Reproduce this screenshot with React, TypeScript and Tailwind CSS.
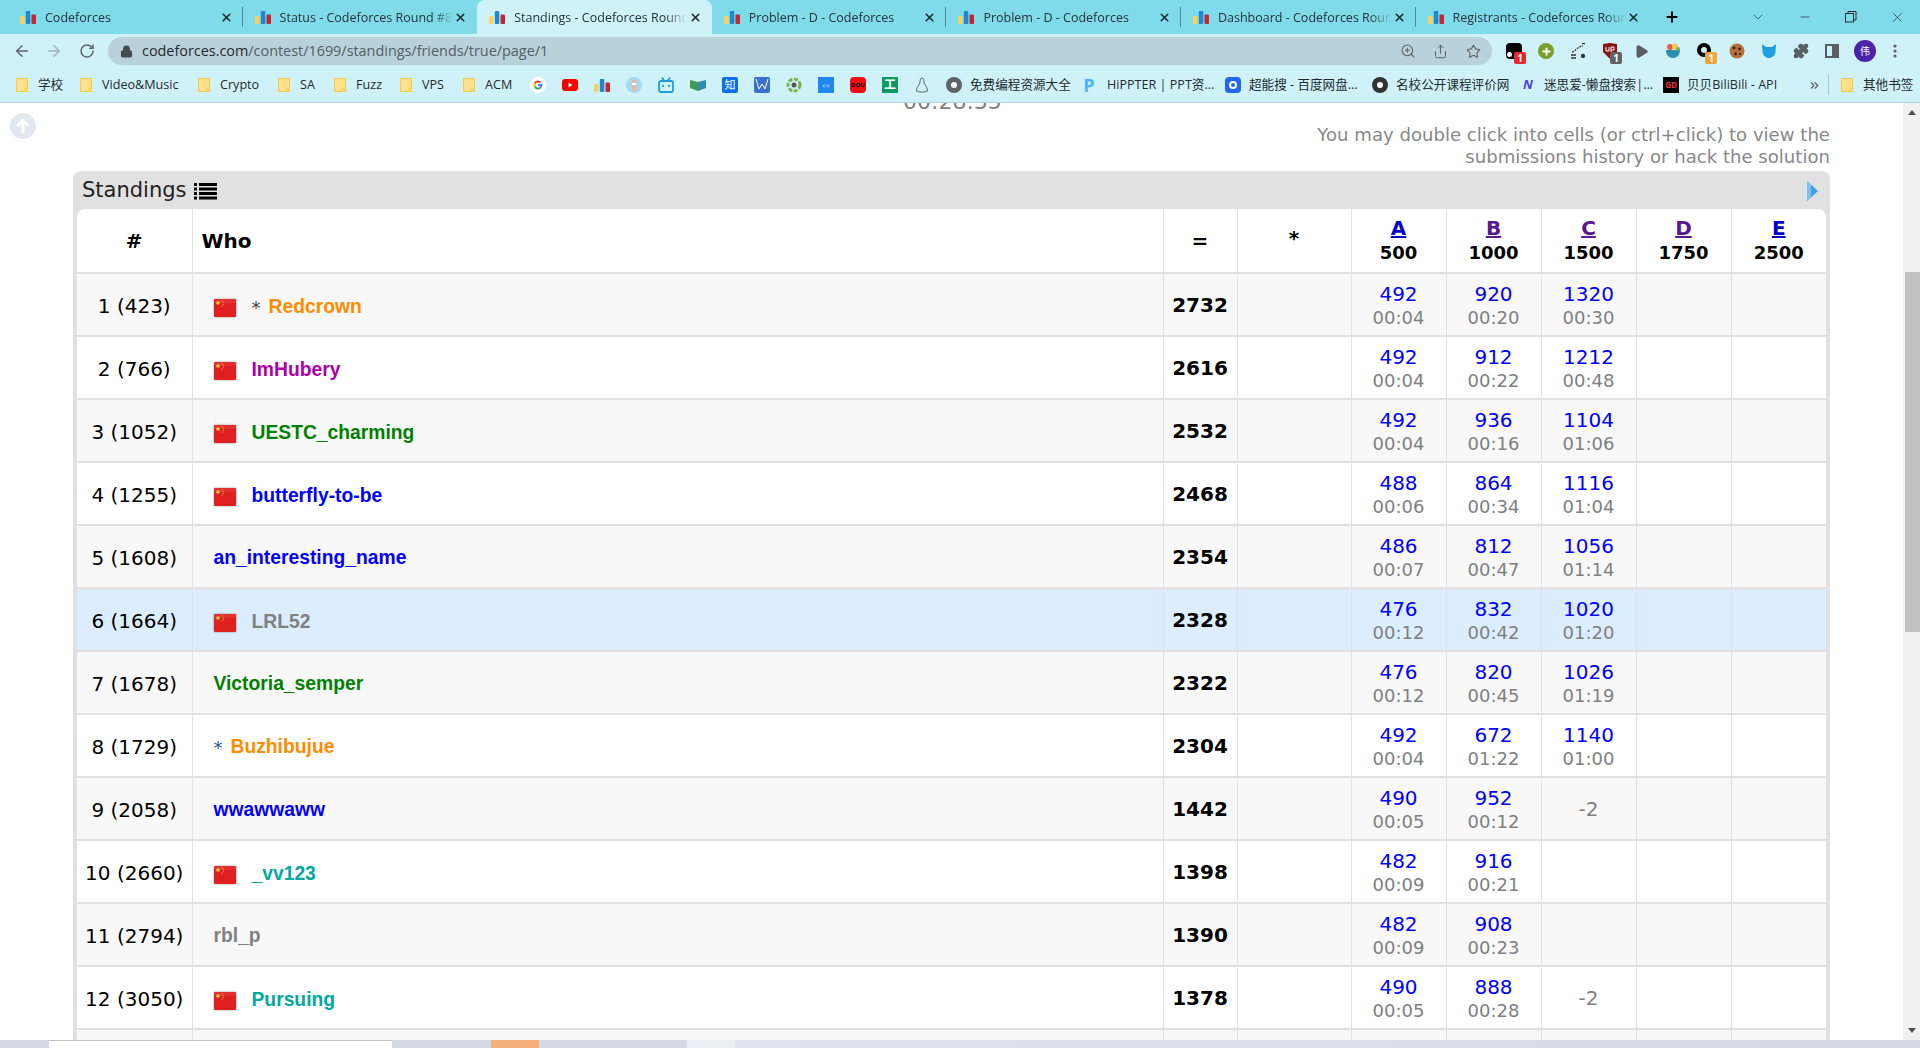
import { ArrowLeft, ArrowRight, RotateCw, Lock, ZoomIn, Share, Star, Puzzle, X, Plus, Minus, ChevronDown, ChevronsRight, Play, Plus as PlusIcon } from 'lucide-react';

const ui = "font-['Open_Sans','Noto_Sans_CJK_SC',sans-serif]";

const CfIcon = () => (
  <svg width="16" height="13" viewBox="0 0 16 13" className="shrink-0">
    <rect x="0" y="5" width="4.5" height="8" rx="1" fill="#fbd05b" />
    <rect x="5.8" y="0" width="4.5" height="13" rx="1" fill="#1e88d2" />
    <rect x="11.5" y="3.5" width="4.5" height="9.5" rx="1" fill="#c8252c" />
  </svg>
);

const Folder = () => (
  <svg width="12" height="14" viewBox="0 0 12 14" className="shrink-0">
    <path d="M0.5 0.5H11.5V13.5H0.5Z" fill="#fde28b" stroke="#f5c94b" />
    <rect x="9" y="10" width="2.5" height="3.5" fill="none" stroke="#f5c94b" />
  </svg>
);

const tabs = [
  { title: 'Codeforces', active: false },
  { title: 'Status - Codeforces Round #8', active: false },
  { title: 'Standings - Codeforces Round', active: true },
  { title: 'Problem - D - Codeforces', active: false },
  { title: 'Problem - D - Codeforces', active: false },
  { title: 'Dashboard - Codeforces Round', active: false },
  { title: 'Registrants - Codeforces Round', active: false },
];

const TabBar = () => (
  <div className={`flex h-[34px] items-center bg-[#7fdbe9] pl-[8px] ${ui}`}>
    {tabs.map((t, i) => (
      <div
        key={i}
        className={`flex h-full w-[234.6px] shrink-0 items-center pt-[1px] pl-[12px] pr-[10px] ${
          t.active ? 'rounded-t-lg bg-[#cff2f9]' : ''
        } ${i < 6 && !t.active && !tabs[i + 1].active ? 'relative after:absolute after:right-0 after:top-[7px] after:h-[20px] after:w-px after:bg-[#4a8f9c]' : ''}`}
      >
        <CfIcon />
        <span className="ml-[9px] w-[173px] overflow-hidden pt-[1px] text-[12.5px] whitespace-nowrap text-[#263238] [mask-image:linear-gradient(to_right,black_88%,transparent)]">{t.title}</span>
        <X size={13} strokeWidth={3} className="ml-auto text-[#1c2b30]" />
      </div>
    ))}
    <Plus size={16} strokeWidth={3} className="ml-[14px] text-black" />
    <ChevronDown size={16} strokeWidth={1.2} className="ml-[70px] text-[#2b4a50]" />
    <Minus size={14} strokeWidth={1.2} className="ml-[32px] text-[#1c2b30]" />
    <svg width="12" height="12" viewBox="0 0 12 12" className="ml-[33px]" fill="none" stroke="#1c2b30">
      <rect x="0.5" y="2.5" width="8" height="8.5" />
      <path d="M3 2.5V0.5H11V9H8.5" />
    </svg>
    <X size={15} strokeWidth={1.1} className="ml-[33px] text-[#1c2b30]" />
  </div>
);

const Badge = ({ n, color }: { n: string; color: string }) => (
  <span className={`absolute -right-[4px] -bottom-[5px] flex h-[12px] w-[12px] items-center justify-center rounded-[2px] text-[10px] font-bold text-white ${color}`}>{n}</span>
);

const Toolbar = () => (
  <div className={`flex h-[34px] items-center bg-[#cff2f9] ${ui}`}>
    <ArrowLeft size={18} strokeWidth={2} className="ml-[13px] text-[#5f6368]" />
    <ArrowRight size={18} strokeWidth={2} className="ml-[14px] text-[#a7b4b9]" />
    <RotateCw size={16} strokeWidth={2.2} className="ml-[16px] text-[#5f6368]" />
    <div className="ml-[13px] flex h-[28px] w-[1384px] shrink-0 items-center rounded-full bg-[#b9d1d8] pl-[12px]">
      <Lock size={13} strokeWidth={2.5} className="text-[#454b50]" fill="#454b50" />
      <span className="ml-[9px] text-[14.4px] text-[#1f2a2e]">
        codeforces.com<span className="text-[#4f6066]">/contest/1699/standings/friends/true/page/1</span>
      </span>
      <ZoomIn size={16} strokeWidth={1.6} className="ml-auto text-[#5f6368]" />
      <Share size={15} strokeWidth={1.6} className="ml-[17px] text-[#5f6368]" />
      <Star size={15} strokeWidth={1.8} className="mr-[11px] ml-[18px] text-[#5f6368]" />
    </div>
    <div className="ml-[14px] flex items-center gap-[16px]">
      <div className="relative h-[16px] w-[16px] rounded-[4px] bg-black">
        <span className="absolute bottom-[2px] left-[1px] h-[5px] w-[5px] rounded-full bg-white" />
        <Badge n="1" color="bg-[#e8262c]" />
      </div>
      <div className="flex h-[16px] w-[16px] items-center justify-center rounded-full bg-[#7c9f2a]">
        <PlusIcon size={11} strokeWidth={4} className="text-white" />
      </div>
      <svg width="16" height="16" viewBox="0 0 16 16" fill="none" stroke="#333" strokeWidth="1.3">
        <path d="M2 9C5 9 8 3 13 3" strokeDasharray="2 1" />
        <path d="M12 0.5L15 0.5M1 12H6M1 15H6" />
        <circle cx="13" cy="13" r="1.5" fill="#333" />
      </svg>
      <div className="relative h-[16px] w-[16px]">
        <svg width="16" height="16" viewBox="0 0 16 16">
          <path d="M1 1L8 0L15 1V9L8 16L1 9Z" fill="#8a1414" />
          <path d="M4 4V8H7V4M9 9V4H12V7H9" fill="none" stroke="#fff" strokeWidth="1" />
        </svg>
        <Badge n="1" color="bg-[#5f6368]" />
      </div>
      <Play size={15} className="text-[#5a5f63]" fill="#5a5f63" />
      <svg width="16" height="16" viewBox="0 0 16 16">
        <path d="M1 7H15C15 12 12 15 8 15C4 15 1 12 1 7Z" fill="#2b8fb0" />
        <circle cx="5" cy="4" r="3" fill="#e65f4a" />
        <circle cx="10" cy="3.5" r="3" fill="#f0c948" />
        <circle cx="13" cy="6" r="2" fill="#6cb33f" />
      </svg>
      <div className="relative h-[16px] w-[16px]">
        <div className="h-[14px] w-[14px] rounded-full border-[4px] border-black" />
        <Badge n="1" color="bg-[#f0a63c]" />
      </div>
      <svg width="16" height="16" viewBox="0 0 16 16">
        <circle cx="8" cy="8" r="7.5" fill="#b5723a" />
        <circle cx="5" cy="5" r="1.4" fill="#3a2214" />
        <circle cx="10.5" cy="6" r="1.4" fill="#3a2214" />
        <circle cx="6.5" cy="11" r="1.4" fill="#3a2214" />
        <circle cx="11" cy="11" r="1.1" fill="#3a2214" />
      </svg>
      <svg width="16" height="16" viewBox="0 0 16 16">
        <path d="M1 1L5 4H11L15 1L14.5 9C14 12.5 11 15 8 15C5 15 2 12.5 1.5 9Z" fill="#1f9ee0" />
      </svg>
      <Puzzle size={16} className="text-[#5a5f63]" fill="#5a5f63" />
      <div className="flex h-[14px] w-[14px] justify-end border-2 border-[#5a5f63]">
        <div className="h-full w-[5px] bg-[#5a5f63]" />
      </div>
      <div className="-mx-[1px] flex h-[22px] w-[22px] items-center justify-center rounded-full bg-[#4c23a8] text-[10px] text-white">伟</div>
      <svg width="4" height="14" viewBox="0 0 4 14" fill="#5f6368" className="ml-[2px]">
        <circle cx="2" cy="2" r="1.6" />
        <circle cx="2" cy="7" r="1.6" />
        <circle cx="2" cy="12" r="1.6" />
      </svg>
    </div>
  </div>
);

const GlobeIcon = ({ dark }: { dark?: boolean }) => (
  <div className={`flex h-[16px] w-[16px] shrink-0 items-center justify-center rounded-full ${dark ? 'bg-[#333]' : 'bg-[#5f6368]'}`}>
    <span className="h-[6px] w-[6px] rounded-full bg-white" />
  </div>
);

const marks = [
  <svg key="g" width="16" height="16" viewBox="0 0 16 16"><circle cx="8" cy="8" r="8" fill="#fff" /><path d="M8 3.5A4.5 4.5 0 0 1 11 4.7L9.6 6A2.5 2.5 0 0 0 5.7 7L4 5.7A4.5 4.5 0 0 1 8 3.5Z" fill="#ea4335" /><path d="M4 5.7L5.7 7A2.5 2.5 0 0 0 5.7 9L4 10.3A4.5 4.5 0 0 1 4 5.7Z" fill="#fbbc05" /><path d="M4 10.3L5.7 9A2.5 2.5 0 0 0 9.5 10L11 11.3A4.5 4.5 0 0 1 4 10.3Z" fill="#34a853" /><path d="M8 7H12.4A4.5 4.5 0 0 1 11 11.3L9.5 10A2 2 0 0 0 10.3 9H8Z" fill="#4285f4" /></svg>,
  <svg key="yt" width="16" height="12" viewBox="0 0 16 12"><rect width="16" height="12" rx="3" fill="#f00" /><path d="M6.5 3.5L10.5 6L6.5 8.5Z" fill="#fff" /></svg>,
  <CfIcon key="cf" />,
  <svg key="lh" width="16" height="16" viewBox="0 0 16 16"><circle cx="8" cy="8" r="8" fill="#a6d8ee" /><rect x="6" y="3" width="4" height="11" fill="#f0b7a8" /><rect x="6" y="6" width="4" height="2" fill="#fff" /></svg>,
  <svg key="bili" width="16" height="16" viewBox="0 0 16 16" fill="none" stroke="#1ba0d6" strokeWidth="1.8"><rect x="1" y="4" width="14" height="11" rx="2" /><path d="M4 0.5L6 3.5M12 0.5L10 3.5" /><path d="M5 8V10M11 8V10" /></svg>,
  <svg key="book" width="16" height="12" viewBox="0 0 16 12"><path d="M0 1L8 3V12L0 9Z" fill="#3f9b4d" /><path d="M8 3L16 1V9L8 12Z" fill="#2d8bb5" /></svg>,
  <div key="zh" className="flex h-[16px] w-[16px] items-center justify-center rounded-[2px] bg-[#0a6fe8] text-[11px] text-white">知</div>,
  <svg key="wave" width="16" height="16" viewBox="0 0 16 16"><rect width="16" height="16" rx="2" fill="#3b6fd0" /><path d="M2 2L5 12L8 7L11 12L14 2" fill="none" stroke="#fff" strokeWidth="1" /></svg>,
  <svg key="gear" width="16" height="16" viewBox="0 0 16 16"><circle cx="8" cy="8" r="6" fill="none" stroke="#7cb24a" strokeWidth="3" strokeDasharray="4 1.5" /><circle cx="8" cy="8" r="2.5" fill="#555" /></svg>,
  <div key="code" className="flex h-[16px] w-[16px] items-center justify-center bg-[#1e88ee] text-[8px] text-white">‹·›</div>,
  <div key="dou" className="flex h-[16px] w-[16px] items-center justify-center rounded-[4px] bg-[#ee1111] text-[6px] font-bold text-black">DOU</div>,
  <div key="gong" className="flex h-[16px] w-[16px] items-center justify-center bg-[#0e9a63] text-[12px] font-bold text-white">工</div>,
  <svg key="tux" width="14" height="16" viewBox="0 0 14 16" fill="none" stroke="#555" strokeWidth="0.9"><path d="M7 1C5 1 5 4 5 6C3 9 1 12 1.5 14L5 15H9L12.5 14C13 12 11 9 9 6C9 4 9 1 7 1Z" /></svg>,
  <GlobeIcon key="globe" />,
];

const folders = [
  { name: '学校', width: 'w-[64px]' },
  { name: 'Video&Music', width: 'w-[118px]' },
  { name: 'Crypto', width: 'w-[80px]' },
  { name: 'SA', width: 'w-[56px]' },
  { name: 'Fuzz', width: 'w-[66px]' },
  { name: 'VPS', width: 'w-[63px]' },
  { name: 'ACM', width: 'w-[59px]' },
];

const sites = [
  { name: '免费编程资源大全', width: 'w-[111px]', gap: '', icon: null },
  { name: 'HiPPTER | PPT资...', width: 'w-[144px]', gap: 'gap-[10px]', icon: <span className="w-[16px] text-center text-[18px] leading-none font-bold text-[#4db5f5]">P</span> },
  { name: '超能搜 - 百度网盘...', width: 'w-[147px]', gap: 'gap-[8px]', icon: <div className="flex h-[16px] w-[16px] items-center justify-center rounded-[4px] bg-[#2468f2]"><span className="h-[8px] w-[8px] rounded-full border-2 border-white" /></div> },
  { name: '名校公开课程评价网', width: 'w-[148px]', gap: 'gap-[8px]', icon: <GlobeIcon dark /> },
  { name: '迷思爱-懒盘搜索|...', width: 'w-[143px]', gap: 'gap-[8px]', icon: <span className="w-[16px] text-center text-[13px] leading-none font-bold text-[#4a3fd6] italic">N</span> },
  { name: '贝贝BiliBili - API', width: 'w-[145px]', gap: 'gap-[8px]', icon: <div className="flex h-[16px] w-[16px] items-center justify-center bg-black text-[8px] font-bold text-[#e33]">GD</div> },
];

const Bookmarks = () => (
  <div className={`flex h-[35px] items-center border-b border-[#b3d3dc] bg-[#cff2f9] pl-[16px] text-[12.6px] whitespace-nowrap text-[#1f2a2e] ${ui}`}>
    {folders.map((f) => (
      <div key={f.name} className={`flex shrink-0 items-center gap-[10px] ${f.width}`}>
        <Folder />
        <span>{f.name}</span>
      </div>
    ))}
    <div className="flex items-center">
      {marks.map((m, i) => (
        <div key={i} className="flex w-[32px] shrink-0 justify-center">{m}</div>
      ))}
    </div>
    {sites.map((s) => (
      <div key={s.name} className={`flex shrink-0 items-center ${s.gap} ${s.width}`}>
        {s.icon}
        <span>{s.name}</span>
      </div>
    ))}
    <ChevronsRight size={13} strokeWidth={2.2} className="text-[#5f6368]" />
    <span className="ml-[7px] h-[20px] w-px bg-[#a8c6cf]" />
    <div className="ml-[12px] flex items-center gap-[10px]">
      <Folder />
      <span>其他书签</span>
    </div>
  </div>
);

const Flag = () => (
  <svg width="22" height="18" viewBox="0 0 22 18" className="shrink-0 drop-shadow-[0_0_1px_rgba(0,0,0,0.4)]">
    <rect width="22" height="18" rx="1" fill="#de2020" />
    <rect width="22" height="4" rx="1" fill="#e84040" opacity="0.5" />
    <circle cx="4" cy="4" r="1.8" fill="#f7d038" />
    <circle cx="8" cy="1.8" r="0.6" fill="#f7d038" />
    <circle cx="9.5" cy="3.5" r="0.6" fill="#f7d038" />
    <circle cx="9.5" cy="5.5" r="0.6" fill="#f7d038" />
    <circle cx="8" cy="7" r="0.6" fill="#f7d038" />
  </svg>
);

type Row = {
  rank: string;
  name: string;
  color: string;
  flag: boolean;
  star?: boolean;
  score: number;
  a: [number, string];
  b: [number, string];
  c?: [number, string] | string;
};

const rows: Row[] = [
  { rank: '1 (423)', name: 'Redcrown', color: 'text-[#ff8c00]', flag: true, star: true, score: 2732, a: [492, '00:04'], b: [920, '00:20'], c: [1320, '00:30'] },
  { rank: '2 (766)', name: 'ImHubery', color: 'text-[#aa00aa]', flag: true, score: 2616, a: [492, '00:04'], b: [912, '00:22'], c: [1212, '00:48'] },
  { rank: '3 (1052)', name: 'UESTC_charming', color: 'text-[#008000]', flag: true, score: 2532, a: [492, '00:04'], b: [936, '00:16'], c: [1104, '01:06'] },
  { rank: '4 (1255)', name: 'butterfly-to-be', color: 'text-[#0000ff]', flag: true, score: 2468, a: [488, '00:06'], b: [864, '00:34'], c: [1116, '01:04'] },
  { rank: '5 (1608)', name: 'an_interesting_name', color: 'text-[#0000ff]', flag: false, score: 2354, a: [486, '00:07'], b: [812, '00:47'], c: [1056, '01:14'] },
  { rank: '6 (1664)', name: 'LRL52', color: 'text-[#808080]', flag: true, score: 2328, a: [476, '00:12'], b: [832, '00:42'], c: [1020, '01:20'] },
  { rank: '7 (1678)', name: 'Victoria_semper', color: 'text-[#008000]', flag: false, score: 2322, a: [476, '00:12'], b: [820, '00:45'], c: [1026, '01:19'] },
  { rank: '8 (1729)', name: 'Buzhibujue', color: 'text-[#ff8c00]', flag: false, star: true, score: 2304, a: [492, '00:04'], b: [672, '01:22'], c: [1140, '01:00'] },
  { rank: '9 (2058)', name: 'wwawwaww', color: 'text-[#0000ff]', flag: false, score: 1442, a: [490, '00:05'], b: [952, '00:12'], c: '-2' },
  { rank: '10 (2660)', name: '_vv123', color: 'text-[#03a89e]', flag: true, score: 1398, a: [482, '00:09'], b: [916, '00:21'] },
  { rank: '11 (2794)', name: 'rbl_p', color: 'text-[#808080]', flag: false, score: 1390, a: [482, '00:09'], b: [908, '00:23'] },
  { rank: '12 (3050)', name: 'Pursuing', color: 'text-[#03a89e]', flag: true, score: 1378, a: [490, '00:05'], b: [888, '00:28'], c: '-2' },
];

const problems = [
  { id: 'A', pts: 500, link: 'text-[#0000cc]' },
  { id: 'B', pts: 1000, link: 'text-[#551a8b]' },
  { id: 'C', pts: 1500, link: 'text-[#551a8b]' },
  { id: 'D', pts: 1750, link: 'text-[#551a8b]' },
  { id: 'E', pts: 2500, link: 'text-[#0000cc]' },
];

const td = 'border-l border-[#e1e1e1] p-0 text-center align-middle';

const Cell = ({ v }: { v?: [number, string] | string }) => {
  if (!v) return <td className={td} />;
  if (typeof v === 'string') return <td className={`${td} pt-[1px] text-[20px] text-[#808080]`}>{v}</td>;
  return (
    <td className={`${td} pt-[3px]`}>
      <div className="text-[20px] leading-[23px] text-[#0000ff]">{v[0]}</div>
      <div className="text-[18px] leading-[23px] text-[#808080]">{v[1]}</div>
    </td>
  );
};

const StandingsTable = () => (
  <table className="w-full table-fixed border-collapse bg-white font-['DejaVu_Sans',sans-serif] text-black">
    <colgroup>
      <col className="w-[115px]" />
      <col />
      <col className="w-[74px]" />
      <col className="w-[114px]" />
      <col className="w-[95px]" />
      <col className="w-[95px]" />
      <col className="w-[95px]" />
      <col className="w-[95px]" />
      <col className="w-[95px]" />
    </colgroup>
    <thead>
      <tr className="h-[64px] border-b-2 border-[#e1e1e1]">
        <th className="p-0 text-center align-middle text-[20px] font-bold">#</th>
        <th className="border-l border-[#e1e1e1] pl-[9px] text-left align-middle text-[20px] font-bold">Who</th>
        <th className={`${td} text-[20px] font-bold`}>=</th>
        <th className={`${td} pb-[6px] text-[20px] font-bold`}>*</th>
        {problems.map((p) => (
          <th key={p.id} className={td}>
            <div className={`text-[20px] leading-[24px] font-bold underline ${p.link}`}>{p.id}</div>
            <div className="text-[18px] leading-[25px] font-bold">{p.pts}</div>
          </th>
        ))}
      </tr>
    </thead>
    <tbody>
      {rows.map((r, i) => (
        <tr key={r.rank} className={`h-[63px] border-b-2 border-[#e1e1e1] ${i === 5 ? 'bg-[#dbedfe]' : i % 2 === 0 ? 'bg-[#f8f8f8]' : 'bg-white'}`}>
          <td className="p-0 pt-[2px] text-center align-middle text-[20px]">{r.rank}</td>
          <td className="border-l border-[#e1e1e1] p-0 pl-[21px] align-middle">
            <div className={`flex items-center ${r.flag ? 'pt-[6px]' : 'pt-[4px]'}`}>
              {r.flag && <span className="mr-[16px]"><Flag /></span>}
              {r.star && <span className={`mr-[8px] text-[18px] leading-none ${i === 0 ? 'text-[#444]' : 'text-[#1a5a8a]'}`}>*</span>}
              <span className={`font-['Liberation_Sans',sans-serif] text-[19.3px] font-bold ${r.color}`}>{r.name}</span>
            </div>
          </td>
          <td className={`${td} pt-[1px] text-[20px] font-bold`}>{r.score}</td>
          <td className={td} />
          <Cell v={r.a} />
          <Cell v={r.b} />
          <Cell v={r.c} />
          <td className={td} />
          <td className={td} />
        </tr>
      ))}
      <tr className="h-[63px] bg-[#f8f8f8]">
        <td className="p-0" />
        <td className="border-l border-[#e1e1e1] p-0" />
        <td className={td} />
        <td className={td} />
        <td className={td} />
        <td className={td} />
        <td className={td} />
        <td className={td} />
        <td className={td} />
      </tr>
    </tbody>
  </table>
);

const Scrollbar = () => (
  <div className="flex w-[17px] shrink-0 flex-col items-center bg-[#f1f1f1]">
    <span className="mt-[7px] h-0 w-0 border-x-[4px] border-b-[5px] border-x-transparent border-b-[#505050]" />
    <div className="mt-[157px] h-[360px] w-[15px] self-end bg-[#c1c1c1]" />
    <span className="mt-auto mb-[7px] h-0 w-0 border-x-[4px] border-t-[5px] border-x-transparent border-t-[#505050]" />
  </div>
);

const Taskbar = () => (
  <div className="flex h-[8px] shrink-0 bg-[#d3dae6]">
    <div className="ml-[49px] h-full w-[343px] border-t border-[#c5c5c5] bg-white" />
    <div className="ml-[99px] h-full w-[48px] bg-[#f5b07a]" />
    <div className="ml-[148px] h-full w-[48px] bg-[#eaedf3]" />
    <div className="h-full flex-1 bg-gradient-to-r from-[#dde4f0] to-[#d3dae6]" />
  </div>
);

export default function App() {
  return (
    <div className="flex h-[1048px] w-[1920px] flex-col overflow-hidden bg-white">
      <TabBar />
      <Toolbar />
      <Bookmarks />
      <div className="relative flex min-h-0 flex-1">
        <div className="absolute top-[10px] left-[10px] flex h-[26px] w-[26px] items-center justify-center rounded-full bg-[#e3e8ee]">
          <svg width="16" height="16" viewBox="0 0 16 16" fill="none" stroke="#fff" strokeWidth="3">
            <path d="M8 15V3M2.5 8L8 2.5L13.5 8" />
          </svg>
        </div>
        <div className="min-w-0 flex-1 overflow-hidden px-[73px] font-['DejaVu_Sans',sans-serif]">
          <div className="-mt-[14px] h-[35px] pl-[830px] text-[22px] leading-[26px] text-[#808080]">00:28:35</div>
          <div className="text-right text-[18.1px] leading-[22px] text-[#888888]">
            You may double click into cells (or ctrl+click) to view the
            <br />
            submissions history or hack the solution
          </div>
          <div className="mt-[3px] rounded-t-lg bg-[#e1e1e1] px-[4px]">
            <div className="flex h-[38px] items-center pt-[2px] pl-[5px] text-[21px] text-[#222]">
              <span>Standings</span>
              <svg width="23" height="18" viewBox="0 0 23 18" className="ml-[7px]" fill="#000">
                <rect y="1" width="3" height="3" /><rect x="5" y="1" width="18" height="3" />
                <rect y="5.5" width="3" height="3" /><rect x="5" y="5.5" width="18" height="3" />
                <rect y="10" width="3" height="3" /><rect x="5" y="10" width="18" height="3" />
                <rect y="14.5" width="3" height="3" /><rect x="5" y="14.5" width="18" height="3" />
              </svg>
              <svg width="11" height="20" viewBox="0 0 11 20" className="mr-[8px] ml-auto">
                <path d="M0 0L11 10L0 20Z" fill="#3f9fe0" />
                <path d="M0 0L4 4V16L0 20Z" fill="#7fc4f0" />
              </svg>
            </div>
            <div className="overflow-hidden rounded-t-lg">
              <StandingsTable />
            </div>
          </div>
        </div>
        <Scrollbar />
      </div>
      <Taskbar />
    </div>
  );
}
